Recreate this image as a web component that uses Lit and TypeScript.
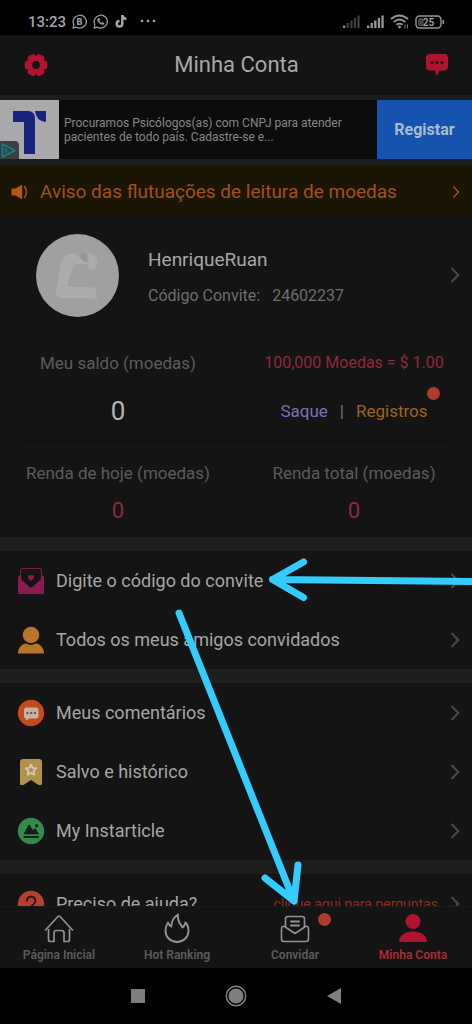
import { LitElement, html, css, svg, nothing, TemplateResult } from "lit";
import { customElement, property } from "lit/decorators.js";

const glyph = (size: number, body: unknown, height = size) => html`<svg
  width=${size} height=${height} viewBox="0 0 ${size} ${height}" aria-hidden="true">${body}</svg>`;

const icons = {
  gear: glyph(24, svg`
    <g fill="#b0132f">
      <circle cx="12" cy="12" r="9"/>
      ${[0, 60, 120, 180, 240, 300].map(a => svg`<rect x="13.500" y="7.600" width="9.800" height="8.800" rx="2.800" transform="rotate(${a} 12 12)"/>`)}
    </g>
    <circle cx="12" cy="12" r="3.900" fill="#141414"/>`),
  chat: glyph(24, svg`
    <path fill="#b0132f" d="M5 1h14a4 4 0 0 1 4 4v8.500a4 4 0 0 1-4 4h-4.500L12.600 21.500q-.9 1.300-1.500 0L9.500 17.500H5a4 4 0 0 1-4-4V5a4 4 0 0 1 4-4z"/>
    <g fill="#2c0810"><circle cx="7" cy="9.500" r="1.600"/><circle cx="12" cy="9.500" r="1.600"/><circle cx="17" cy="9.500" r="1.600"/></g>`),
  horn: glyph(20, svg`
    <path fill="#b4551c" d="M2.500 6.500h3L11 3.200q1.200-.5 1.200.7v12.200q0 1.200-1.200.7L5.500 13.500h-3Q1.500 13.500 1.500 12.500v-5q0-1 1-1z"/>
    <path fill="none" stroke="#b4551c" stroke-width="1.400" stroke-linecap="round" d="M14.500 4.500q4 5.500 0 11"/>`),
  invite: glyph(28, svg`
    <path fill="#141414" stroke="#7d1849" stroke-width="1.200" d="M3.600 12V3.500a2 2 0 0 1 2-2h16.800a2 2 0 0 1 2 2V12"/>
    <path fill="#8b1a50" d="M1 9.500L3.500 8 14 20 24.500 8 27 9.500V25.500a1.500 1.500 0 0 1-1.500 1.500h-23A1.500 1.500 0 0 1 1 25.500z"/>
    <path fill="#141414" d="M4.200 12.500L12.600 20q1.400 1 2.800 0l8.400-7.500V5H4.200z"/>
    <path fill="#8b1a50" d="M14 13.800c-4.200-3-3.300-5.800-1.400-5.800.8 0 1.400.6 1.400.8 0-.2.600-.8 1.400-.8 1.900 0 2.800 2.800-1.400 5.800z"/>`),
  friends: glyph(28, svg`
    <g fill="#b8752a"><circle cx="14" cy="9" r="8.300"/><path d="M1 27.500C1 22 4.500 18 9 17.500q5 2.800 10 0c4.500.5 8 4.500 8 10z"/></g>`),
  comments: glyph(28, svg`
    <circle cx="14" cy="14" r="13.200" fill="#c34a1d"/>
    <path fill="#bdb5b0" d="M9.500 8.500h9.500a2.500 2.500 0 0 1 2.500 2.500v6a2.500 2.500 0 0 1-2.500 2.500h-6.500l-2.800 1.700q-.9.300-.8-.6v-1.100A2.500 2.500 0 0 1 7 17v-6a2.500 2.500 0 0 1 2.500-2.500z"/>
    <g fill="#a8431f"><circle cx="10.500" cy="14" r="1.200"/><circle cx="14.200" cy="14" r="1.200"/><circle cx="17.900" cy="14" r="1.200"/></g>`),
  saved: glyph(28, svg`
    <path fill="#b3914a" d="M6 1h16a3 3 0 0 1 3 3v21.500q0 2-2 1.600L21.500 27 14 22 6.500 27l-1.500.1q-2 .4-2-1.600V4a3 3 0 0 1 3-3z"/>
    <path fill="none" stroke="#cfc8b8" stroke-width="1.900" stroke-linejoin="round" d="M14 6.500l1.600 3.400 3.700.5-2.700 2.600.7 3.700-3.300-1.800-3.300 1.800.7-3.700-2.700-2.600 3.700-.5z"/>`),
  article: glyph(28, svg`
    <circle cx="14" cy="14" r="13.200" fill="#348a4c"/>
    <g fill="#141f17"><path d="M6.500 17.200L11.300 8.300q.9-1.200 1.800 0l2.700 5 1.300-1.600q.9-.8 1.700.2l3.200 5.300z"/>
    <rect x="6.500" y="19" width="15.500" height="1.900" rx=".9"/><circle cx="19.600" cy="8.700" r="1.700"/></g>`),
  help: glyph(28, svg`
    <circle cx="14" cy="14" r="13.200" fill="#b5402e"/>
    <path fill="none" stroke="#2a1512" stroke-width="1.900" stroke-linecap="round" d="M9.800 10.800a4.300 4.300 0 1 1 6.500 3.700q-2.300 1.200-2.300 3.500"/>
    <circle cx="14" cy="21.500" r="1.300" fill="#2a1512"/>`),
  home: glyph(30, svg`
    <g fill="none" stroke="#929292" stroke-width="1.700" stroke-linejoin="round" stroke-linecap="round">
      <path d="M1.500 17L14 3.500q1-.9 2 0L28.500 17"/>
      <path d="M4.500 16.500V26.500q0 2 2 2H10V20q0-2.500 2.500-2.500h5Q20 17.500 20 20v8.500h3.500q2 0 2-2V16.500"/></g>`),
  fire: glyph(30, svg`
    <path fill="none" stroke="#929292" stroke-width="1.900" stroke-linejoin="round" d="M16 1.500C11 4.500 9.500 8.500 9.300 13.500Q7 12.500 6 9.500 3.500 13 3.500 18a11.500 11 0 0 0 23 0q0-5.500-3-8.500Q23 12.500 20.500 14.500 19.500 12.500 18.500 11.500 15.500 7.500 16 1.500z"/>`),
  mail: glyph(30, svg`
    <g fill="none" stroke="#929292" stroke-width="1.600" stroke-linejoin="round" stroke-linecap="round">
      <path d="M5.500 14V6q0-2.500 2.500-2.500h14Q24.500 3.500 24.500 6v8"/>
      <path d="M4.500 13.500Q1.500 12.500 1.500 16V26q0 2.500 2.500 2.500h22q2.500 0 2.500-2.500V16q0-3.500-3-2.500L15 20.500z"/>
      <path stroke-width="1.900" d="M11 8.500h8M11 12.500h8"/></g>`),
  person: glyph(30, svg`
    <g fill="#b0132f"><circle cx="15" cy="8.500" r="7.500"/><path d="M1 29C1 22.500 7 18.500 15 18.500S29 22.500 29 29z"/></g>`),
};

const bars = (colors: string[]) => glyph(18, svg`
  ${colors.map((c, i) => svg`<rect x=${1 + i * 3.6} y=${10.5 - i * 2.5} width="2.300" height=${2.5 + i * 2.5} fill=${c}/>`)}`, 14);

const chevron = (color = "#4a4a4a") => html`<svg class="chevron" width="10" height="18" viewBox="0 0 10 18" aria-hidden="true">
  <path d="M1.500 2L8.300 9l-6.800 7" fill="none" stroke=${color} stroke-width="1.900"/></svg>`;

@customElement("status-bar")
class StatusBar extends LitElement {
  static styles = css`
    :host { display: flex; align-items: center; justify-content: space-between; height: 35px;
      padding: 8px 27px 0 28px; box-sizing: border-box; background: #000; color: #a4a4a4;
      font-family: Roboto, "Liberation Sans", sans-serif; }
    .group { display: flex; align-items: center; gap: 6px; }
    .time { font-size: 15px; line-height: 18px; font-weight: 500; }
    svg { display: block; }
  `;
  render() {
    return html`
      <div class="group">
        <span class="time">13:23</span>
        ${glyph(15, svg`
          <g fill="none" stroke="#989898" stroke-width="1.300"><path d="M1.200 14l.6-3.600A6.600 6.400 0 1 1 4.500 13.200z" stroke-linejoin="round"/>
          <path stroke-width="1.500" d="M5.700 4.500v6M5.200 4.800h2.600a1.300 1.300 0 0 1 0 2.700H5.700h2.400a1.400 1.400 0 0 1 0 2.800H5.200"/></g>`)}
        ${glyph(15, svg`
          <path d="M1.200 14l.6-3.600A6.600 6.400 0 1 1 4.500 13.200z" fill="none" stroke="#989898" stroke-width="1.300" stroke-linejoin="round"/>
          <path d="M5.100 4.200q1-.7 1.500.5l.5 1.200-.8 1q.8 1.500 2.200 2.100l.9-.9 1.600.8q.8.500-.1 1.300-1.400 1.300-3.600-.1-2.300-1.400-3-3.500-.3-1.700.8-2.400z" fill="#989898"/>`)}
        ${glyph(15, svg`
          <path d="M8.300 1v8.700a2.800 2.800 0 1 1-2.800-2.800M8.300 1.300q.5 3.200 4 3.700" fill="none" stroke="#a4a4a4" stroke-width="2.500"/>`)}
        ${glyph(30, svg`<g fill="#a4a4a4"><circle cx="7" cy="7" r="1.300"/><circle cx="13" cy="7" r="1.300"/><circle cx="19" cy="7" r="1.300"/></g>`, 15)}
      </div>
      <div class="group">
        ${bars(["#8a8a8a", "#3c3c3c", "#3c3c3c", "#3c3c3c", "#3c3c3c"])}
        ${bars(["#989898", "#989898", "#989898", "#989898", "#989898"])}
        ${glyph(19, svg`
          <g fill="none" stroke="#989898" stroke-width="1.900"><path d="M1 5q8.500-7.200 17 0M3.700 8q5.800-4.800 11.600 0M6.400 10.800q3.100-2.300 6.200 0"/></g>
          <circle cx="9.500" cy="13" r="1.400" fill="#989898"/><path d="M15 10.500v4M17.500 10.500v4" stroke="#777" stroke-width="1"/>`, 15)}
        ${glyph(30, svg`
          <rect x="1" y="1" width="25" height="12" rx="3.500" fill="none" stroke="#989898" stroke-width="1.400"/>
          <rect x="3" y="3" width="5.500" height="8" rx="1.500" fill="#444"/>
          <rect x="27.500" y="5" width="1.500" height="4" fill="#989898"/>
          <text x="13.500" y="10.700" text-anchor="middle" font-size="10" font-weight="600" fill="#a4a4a4">25</text>`, 14)}
      </div>`;
  }
}

@customElement("menu-row")
class MenuRow extends LitElement {
  @property() label = "";
  @property() hint = "";
  @property({ attribute: false }) icon: TemplateResult | typeof nothing = nothing;
  static styles = css`
    :host { display: block; }
    .row { display: flex; align-items: center; gap: 11px; height: 59px; padding: 0 12px 0 17px;
      color: #a6a6a6; text-decoration: none; font-size: 18px; line-height: 24px; }
    .label { flex: 1; white-space: nowrap; }
    .hint { color: #98281b; font-size: 14px; margin-right: 1px; }
    svg { display: block; flex: none; }
  `;
  render() {
    return html`<a class="row" href="#">
      ${this.icon}<span class="label">${this.label}</span>
      ${this.hint ? html`<span class="hint">${this.hint}</span>` : nothing}
      ${chevron()}
    </a>`;
  }
}

@customElement("app-root")
class AppRoot extends LitElement {
  static styles = css`
    :host { display: flex; flex-direction: column; height: 100vh; position: relative; overflow: hidden;
      background: #141414; font-family: Roboto, "Liberation Sans", sans-serif; color: #a6a6a6; }
    * { box-sizing: border-box; }
    a { text-decoration: none; color: inherit; }
    button { border: 0; padding: 0; background: none; font: inherit; color: inherit; }
    svg { display: block; flex: none; }
    .header { display: flex; align-items: center; justify-content: space-between; flex: none; height: 60px; padding: 0 23px 0 24px; }
    .title { margin: 0; font-size: 22px; line-height: 28px; font-weight: 400; color: #a8a8a8; }
    .content { flex: 1; min-height: 0; overflow: hidden; }
    .ad { display: flex; align-items: stretch; height: 71px; border: solid #1d1d1d; border-width: 5px 0 7px; background: #0c0c0c; }
    .ad-copy { flex: 1; margin: 0; padding: 16px 0 0 5px; font-size: 12px; line-height: 14px; color: #868686; }
    .ad-button { width: 95px; background: #1553ae; color: #a9bbd4; font-size: 16px; font-weight: 700; }
    .notice { display: flex; align-items: center; gap: 10px; height: 49px; padding: 2px 11px 0 10px; background: #1b1505;
      color: #a5501c; font-size: 19px; line-height: 24px; }
    .notice .chevron { height: 14px; }
    .grow { flex: 1; }
    .profile { display: flex; align-items: center; height: 122px; padding: 0 12px 2px 36px; }
    .identity { flex: 1; display: grid; gap: 12px; padding: 6px 0 0 29px; }
    .name { font-size: 19px; line-height: 24px; }
    .code { display: flex; gap: 12px; font-size: 16px; line-height: 24px; color: #6e6e6e; }
    .stats { display: grid; grid-template-columns: 1fr 1fr; text-align: center; position: relative; }
    .stats::before { content: ""; position: absolute; top: 0; left: 25px; right: 25px; height: 1px; background: #191919; }
    .balance { height: 110px; padding-top: 14px; }
    .income { height: 90px; padding-top: 14px; }
    .caption { font-size: 17px; line-height: 24px; color: #5c5c5c; }
    .rate { font-size: 16px; color: #92283c; }
    .amount { font-size: 26px; line-height: 28px; margin-top: 22px; color: #b4b4b4; }
    .earned { font-size: 22px; line-height: 24px; margin-top: 14px; color: #92283c; }
    .actions { display: flex; justify-content: center; gap: 12px; margin-top: 24px; font-size: 17px; line-height: 24px; color: #777; }
    .withdraw { color: #7474b4; }
    .records { color: #9c6421; position: relative; }
    .dot { position: absolute; width: 13px; height: 13px; border-radius: 50%; background: #b13a2e; }
    .records .dot { right: -12px; top: -12px; }
    .group { border-top: 14px solid #1d1d1d; display: block; }
    .tabs { display: grid; grid-template-columns: repeat(4, 1fr); flex: none; height: 62px; border-top: 1px solid #1b1b1b; background: #141414; }
    .tab { display: flex; flex-direction: column; align-items: center; gap: 4px; padding-top: 6px;
      font-size: 12px; line-height: 16px; font-weight: 600; color: #5c5c5c; }
    .tab.active { color: #a82c34; }
    .icon { position: relative; }
    .icon .dot { right: -21px; top: 0; }
    .system { display: flex; align-items: center; justify-content: center; gap: 80px; flex: none; height: 56px; background: #000; }
    .marks { position: absolute; inset: 0; width: 100%; height: 100%; pointer-events: none; }
  `;

  render() {
    return html`
      <status-bar></status-bar>
      <header class="header">
        <button aria-label="Configurações">${icons.gear}</button>
        <h1 class="title">Minha Conta</h1>
        <button aria-label="Mensagens">${icons.chat}</button>
      </header>
      <main class="content">
        <section class="ad">
          <svg width="59" height="59" viewBox="0 0 59 59" aria-hidden="true">
            <rect width="59" height="59" fill="#a9a9ac"/>
            <path fill="#18237f" d="M13 11h15q7 0 7 8v35H24V22H13z"/>
            <path fill="#18237f" d="M35 11h11v11Q36 21 35 11z"/>
            <path fill="#3b3f42" d="M0 41h15q4 0 4 5v13H0z"/>
            <path fill="none" stroke="#128085" stroke-width="1.800" stroke-linejoin="round" d="M2.500 44L15 50.500 2.500 57z"/>
            <path stroke="#128085" stroke-width="1.600" d="M6 48v5"/>
          </svg>
          <p class="ad-copy">Procuramos Psicólogos(as) com CNPJ para atender<br>pacientes de todo país. Cadastre-se e...</p>
          <button class="ad-button">Registar</button>
        </section>
        <a class="notice" href="#">${icons.horn}<span class="grow">Aviso das flutuações de leitura de moedas</span>${chevron("#a5501c")}</a>
        <a class="profile" href="#">
          <svg width="83" height="83" viewBox="0 0 83 83" aria-hidden="true">
            <defs><linearGradient id="fold" x1="0" x2="1"><stop offset="0" stop-color="#adadad"/><stop offset=".7" stop-color="#929292"/><stop offset="1" stop-color="#a6a6a6"/></linearGradient></defs>
            <circle cx="41.500" cy="41.500" r="41.500" fill="#a0a0a0"/>
            <path fill="#acacac" d="M34 20Q26 22 24 32L20 56Q19 64 27 64H52Q57 64 61 66L59.500 54Q54 52.500 48 53H34Q31.500 53 32 50L36 35Q37.500 30 43 30H51Q52 37 56 36.500 62 34 61 27 60 21 54 19.500 44 18 34 20z"/>
            <path fill="url(#fold)" d="M38 20q8-2.500 14 0 2 4 0 9-3-1-6-3.500-4-3.500-8-5.500z"/>
          </svg>
          <div class="identity">
            <span class="name">HenriqueRuan</span>
            <span class="code"><span>Código Convite:</span><span>24602237</span></span>
          </div>
          ${chevron()}
        </a>
        <section class="stats">
          <div class="balance"><div class="caption">Meu saldo (moedas)</div><div class="amount">0</div></div>
          <div class="balance">
            <div class="caption rate">100,000 Moedas = $ 1.00</div>
            <div class="actions"><a class="withdraw" href="#">Saque</a><span>|</span><a class="records" href="#">Registros<i class="dot"></i></a></div>
          </div>
        </section>
        <section class="stats">
          <div class="income"><div class="caption">Renda de hoje (moedas)</div><div class="earned">0</div></div>
          <div class="income"><div class="caption">Renda total (moedas)</div><div class="earned">0</div></div>
        </section>
        <nav class="group">
          <menu-row label="Digite o código do convite" .icon=${icons.invite}></menu-row>
          <menu-row label="Todos os meus amigos convidados" .icon=${icons.friends}></menu-row>
        </nav>
        <nav class="group">
          <menu-row label="Meus comentários" .icon=${icons.comments}></menu-row>
          <menu-row label="Salvo e histórico" .icon=${icons.saved}></menu-row>
          <menu-row label="My Instarticle" .icon=${icons.article}></menu-row>
        </nav>
        <nav class="group">
          <menu-row label="Preciso de ajuda?" hint="clique aqui para perguntas" .icon=${icons.help}></menu-row>
        </nav>
      </main>
      <nav class="tabs">
        <a class="tab" href="#">${icons.home}<span>Página Inicial</span></a>
        <a class="tab" href="#">${icons.fire}<span>Hot Ranking</span></a>
        <a class="tab" href="#"><span class="icon">${icons.mail}<i class="dot"></i></span><span>Convidar</span></a>
        <a class="tab active" href="#" aria-current="page">${icons.person}<span>Minha Conta</span></a>
      </nav>
      <footer class="system">
        <button aria-label="Recentes">${glyph(14, svg`<rect width="14" height="14" fill="#7e7e7e"/>`)}</button>
        <button aria-label="Início">${glyph(22, svg`<circle cx="11" cy="11" r="9.700" fill="none" stroke="#7e7e7e" stroke-width="1.500"/><circle cx="11" cy="11" r="7.500" fill="#7e7e7e"/>`)}</button>
        <button aria-label="Voltar">${glyph(14, svg`<path d="M14 0v16L0 8z" fill="#7e7e7e"/>`, 16)}</button>
      </footer>
      <svg class="marks" viewBox="0 0 472 1024" preserveAspectRatio="xMidYMid meet" aria-hidden="true">
        <g fill="none" stroke="#33ccff" stroke-width="7" stroke-linecap="round" stroke-linejoin="round">
          <path d="M476 581.500L272.500 579.500M303.500 562L272.500 579.500l31 18"/>
          <path d="M179 613L294 901M265 878l29 23 4-36"/>
        </g>
      </svg>`;
  }
}
